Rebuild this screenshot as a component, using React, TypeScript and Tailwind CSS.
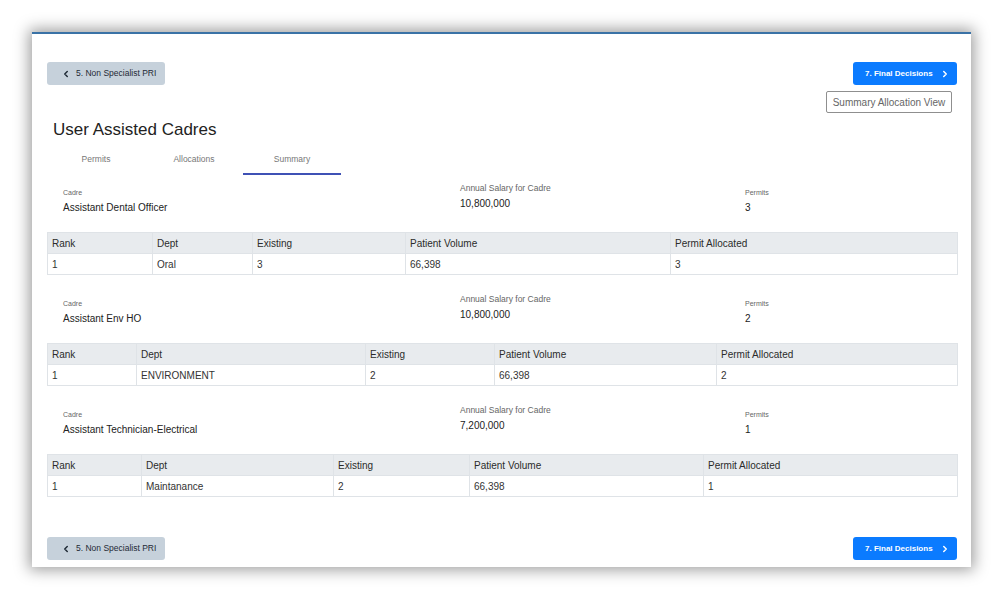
import React from "react";
import { ChevronLeft, ChevronRight } from "lucide-react";

type Section = {
  cadre: string;
  salary: string;
  permits: string;
  widths: string[];
  row: string[];
  first?: boolean;
};

const sections: Section[] = [
  {
    cadre: "Assistant Dental Officer",
    salary: "10,800,000",
    permits: "3",
    widths: ["w-[105px]", "w-[100px]", "w-[153px]", "w-[265px]", "w-[287px]"],
    row: ["1", "Oral", "3", "66,398", "3"],
    first: true,
  },
  {
    cadre: "Assistant Env HO",
    salary: "10,800,000",
    permits: "2",
    widths: ["w-[89px]", "w-[229px]", "w-[129px]", "w-[222px]", "w-[241px]"],
    row: ["1", "ENVIRONMENT", "2", "66,398", "2"],
  },
  {
    cadre: "Assistant Technician-Electrical",
    salary: "7,200,000",
    permits: "1",
    widths: ["w-[94px]", "w-[192px]", "w-[136px]", "w-[234px]", "w-[254px]"],
    row: ["1", "Maintanance", "2", "66,398", "1"],
  },
];

const headers = ["Rank", "Dept", "Existing", "Patient Volume", "Permit Allocated"];

function BackButton() {
  return (
    <button className="flex items-center h-[23px] w-[118px] rounded-[3px] bg-[#c6d1db] pl-[14px] text-[8.5px] text-[#1f2a35]">
      <ChevronLeft size={10} strokeWidth={3.5} className="mr-[5px]" />
      <span>5. Non Specialist PRI</span>
    </button>
  );
}

function NextButton() {
  return (
    <button className="flex items-center h-[23px] w-[104px] rounded-[3px] bg-[#0b7bff] pl-[12px] text-[8px] font-bold text-white">
      <span>7. Final Decisions</span>
      <ChevronRight size={10} strokeWidth={3.5} className="ml-[7px]" />
    </button>
  );
}

function CadreSection({ s }: { s: Section }) {
  return (
    <div className={s.first ? "pt-[13px]" : "pt-[24px]"}>
      <div className="grid grid-cols-[397px_285px_1fr] pl-[16px] items-start">
        <div>
          <div className="text-[7px] leading-[10px] text-[#666]">Cadre</div>
          <div className="mt-[3px] text-[10px] leading-[14px] text-[#222]">{s.cadre}</div>
        </div>
        <div className="-mt-[5px]">
          <div className="text-[8.5px] leading-[10px] text-[#666]">Annual Salary for Cadre</div>
          <div className="mt-[4px] text-[10px] leading-[14px] text-[#222]">{s.salary}</div>
        </div>
        <div>
          <div className="text-[7px] leading-[10px] text-[#666]">Permits</div>
          <div className="mt-[3px] text-[10px] leading-[14px] text-[#222]">{s.permits}</div>
        </div>
      </div>
      <table className="mt-[17px] w-[910px] table-fixed border-collapse text-left">
        <thead>
          <tr className="bg-[#e8ebee]">
            {headers.map((h, i) => (
              <th
                key={h}
                className={`${s.widths[i]} h-[21px] border border-[#dfe3e7] px-[4px] text-[10px] font-normal text-[#2b2b2b]`}
              >
                {h}
              </th>
            ))}
          </tr>
        </thead>
        <tbody>
          <tr>
            {s.row.map((c, i) => (
              <td
                key={i}
                className="h-[21px] border border-[#dfe3e7] px-[4px] text-[10px] text-[#333]"
              >
                {c}
              </td>
            ))}
          </tr>
        </tbody>
      </table>
    </div>
  );
}

export default function App() {
  return (
    <div
      className="w-[1004px] h-[600px] bg-white pt-[32px] pl-[32px] overflow-hidden"
      style={{ fontFamily: '"Liberation Sans", Arial, sans-serif' }}
    >
      <div className="w-[939px] h-[535px] bg-white border-t-2 border-[#3a72a6] shadow-[0_0_14px_3px_rgba(0,0,0,0.38)] pt-[28px] pl-[15px] pr-[14px] flex flex-col">
        <div className="flex justify-between">
          <BackButton />
          <NextButton />
        </div>
        <div className="flex justify-end mt-[6px] mr-[5px]">
          <button className="h-[22px] w-[126px] rounded-[2px] border border-[#8f8f8f] text-[10px] text-[#666]">
            Summary Allocation View
          </button>
        </div>
        <h1 className="mt-[7px] pl-[6px] text-[17px] leading-[20px] text-[#222]">User Assisted Cadres</h1>
        <div className="mt-[6px] flex">
          {["Permits", "Allocations", "Summary"].map((t) => (
            <div
              key={t}
              className={`w-[98px] h-[29px] flex items-center justify-center text-[8.5px] text-[#777] ${
                t === "Summary" ? "border-b-2 border-[#3f51b5]" : "border-b-2 border-transparent"
              }`}
            >
              {t}
            </div>
          ))}
        </div>
        {sections.map((s) => (
          <CadreSection key={s.cadre} s={s} />
        ))}
        <div className="mt-[40px] flex justify-between">
          <BackButton />
          <NextButton />
        </div>
      </div>
    </div>
  );
}
